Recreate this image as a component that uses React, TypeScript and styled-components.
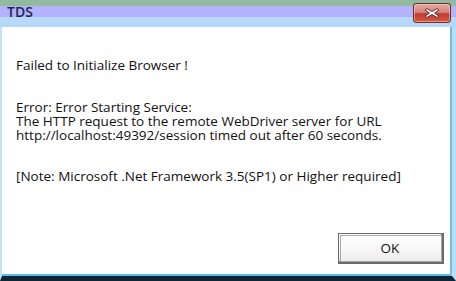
import React from 'react';
import styled, { createGlobalStyle } from 'styled-components';

const GlobalStyle = createGlobalStyle`
  html, body {
    margin: 0;
    padding: 0;
    width: 456px;
    height: 281px;
    overflow: hidden;
    background: #ffffff;
  }
`;

const Window = styled.div`
  width: 456px;
  height: 281px;
  display: flex;
  flex-direction: column;
  font-family: 'Open Sans', 'DejaVu Sans', sans-serif;
  background: #b9dcf8;
`;

const TitleBar = styled.div`
  height: 27px;
  flex: none;
  display: flex;
  align-items: flex-start;
  justify-content: space-between;
  background: linear-gradient(
    to bottom,
    #92b9a1 0px,
    #92b9a1 6px,
    #b3b2fb 6px,
    #b3b2fb 17px,
    #b6d9f9 17px,
    #b6d9f9 27px
  );
`;

const Title = styled.span`
  margin: 4px 0 0 7px;
  font-size: 14px;
  line-height: 16px;
  font-weight: 600;
  color: #1f2650;
`;

const CloseButton = styled.div`
  width: 38px;
  height: 20px;
  margin: 3px 5px 0 0;
  display: flex;
  align-items: center;
  justify-content: center;
  box-sizing: border-box;
  border: 1px solid #6b2a28;
  border-radius: 3px;
  background: linear-gradient(
    to bottom,
    #e9a8a4 0%,
    #d9827c 45%,
    #c23a34 55%,
    #d8583c 100%
  );
  box-shadow: inset 0 0 0 1px rgba(255, 220, 210, 0.5);
`;

const Frame = styled.div`
  flex: 1;
  display: flex;
  border-left: 2px solid #c3e1f8;
  border-right: 4px solid #b9dcf8;
  border-bottom: 5px solid #0f2436;
  box-shadow: inset -2px 0 0 #72bdea, inset 0 -2px 0 #5cbbef;
`;

const Body = styled.div`
  flex: 1;
  display: flex;
  flex-direction: column;
  background: #ffffff;
  padding: 31px 0 0 14px;
  margin-right: 2px;
  margin-bottom: 2px;
`;

const Message = styled.div`
  flex: 1;
  font-size: 13.5px;
  line-height: 14px;
  color: #111111;
`;

const Paragraph = styled.p<{ $gap: number }>`
  margin: ${p => p.$gap}px 0 0 0;
  white-space: pre;
`;

const Footer = styled.div`
  display: flex;
  justify-content: flex-end;
  padding: 0 6px 10px 0;
`;

const OkButton = styled.button`
  width: 106px;
  height: 31px;
  box-sizing: border-box;
  border: 1px solid #6a6a6a;
  border-right-width: 3px;
  border-bottom-width: 3px;
  outline: 1px solid #a9a9a9;
  outline-offset: -3px;
  background: linear-gradient(to bottom, #ffffff 0%, #f6f6f6 60%, #ececec 100%);
  font-family: 'Open Sans', 'DejaVu Sans', sans-serif;
  font-size: 13.5px;
  color: #111111;
  padding: 0;
`;

const CloseGlyph = () => (
  <svg width="18" height="12" viewBox="0 0 18 12">
    <path
      d="M4 1.5 L9 4.5 L14 1.5 L16 3 L11.5 6 L16 9 L14 10.5 L9 7.5 L4 10.5 L2 9 L6.5 6 L2 3 Z"
      fill="#ffffff"
      stroke="#5a2a2a"
      strokeWidth="1"
      strokeLinejoin="round"
    />
  </svg>
);

export default function App() {
  return (
    <>
      <GlobalStyle />
      <Window>
        <TitleBar>
          <Title>TDS</Title>
          <CloseButton>
            <CloseGlyph />
          </CloseButton>
        </TitleBar>
        <Frame>
          <Body>
            <Message>
              <Paragraph $gap={0}>Failed to Initialize Browser !</Paragraph>
              <Paragraph $gap={28}>
                {'Error: Error Starting Service:\nThe HTTP request to the remote WebDriver server for URL\nhttp://localhost:49392/session timed out after 60 seconds.'}
              </Paragraph>
              <Paragraph $gap={27}>
                [Note: Microsoft .Net Framework 3.5(SP1) or Higher required]
              </Paragraph>
            </Message>
            <Footer>
              <OkButton>OK</OkButton>
            </Footer>
          </Body>
        </Frame>
      </Window>
    </>
  );
}
